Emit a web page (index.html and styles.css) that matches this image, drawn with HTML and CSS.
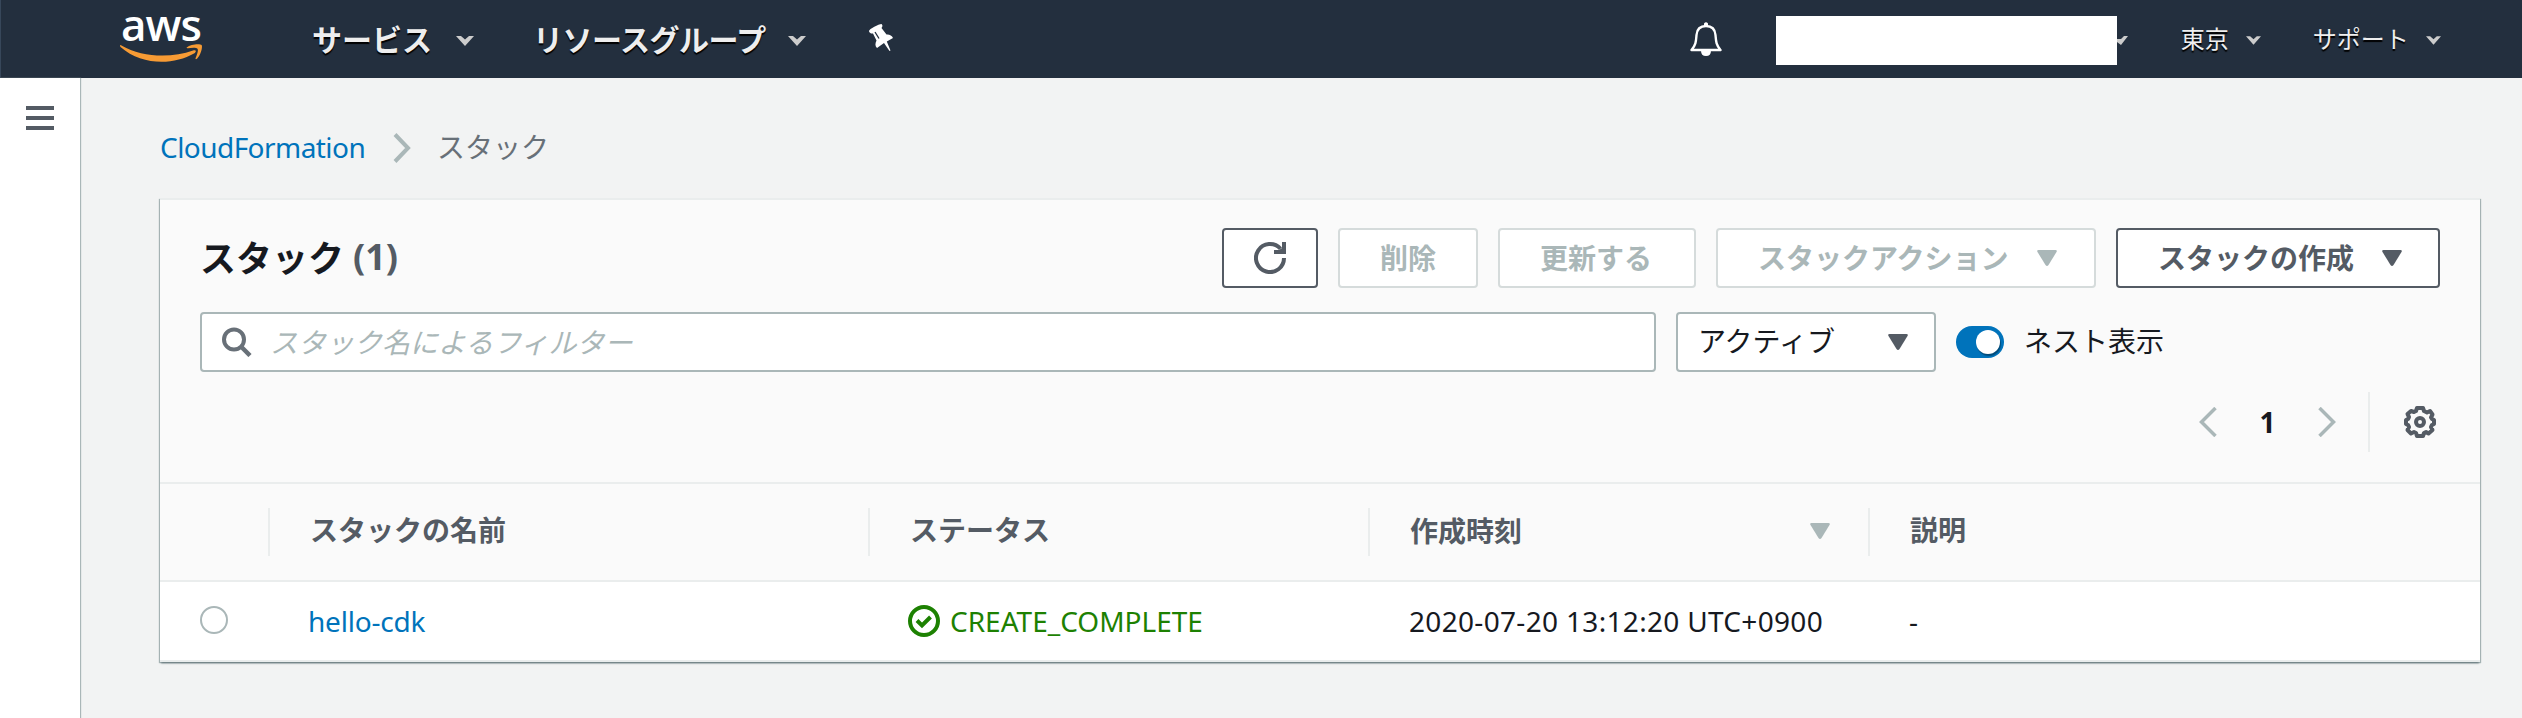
FILE: index.html
```html
<!DOCTYPE html>
<html lang="ja">
<head>
<meta charset="utf-8">
<title>CloudFormation - スタック</title>
<link rel="stylesheet" href="styles.css">
</head>
<body>
<header class="nav">
  <div class="logo">
    <span class="logo-text">aws</span>
    <svg class="smile" viewBox="0 0 82 19" width="82" height="19"><path fill="#f79b34" d="M1 1.2C23 14 52 14 73 6.500C76 5.500 77 7.500 74 9.500C54 21 22 22 .5 3C-.3 2 0 .7 1 1.200ZM67 3.200C70 .3 80 -.8 81.600 1C83 3 80.500 11.500 77 14.800C75.800 15.800 75.200 15 75.600 14C77.500 9.500 78.500 6 77.500 4.700C76.300 3.300 71.500 3.800 68 4.200C66.500 4.300 66.200 3.900 67 3.200Z"/></svg>
  </div>
  <a class="menu services">サービス<svg class="caret" viewBox="0 0 18 10" width="18" height="10"><path fill="#ccc" d="M0 0H5L9 3.500L13 0H18L9 10Z"/></svg></a>
  <a class="menu groups">リソースグループ<svg class="caret" viewBox="0 0 18 10" width="18" height="10"><path fill="#ccc" d="M0 0H5L9 3.500L13 0H18L9 10Z"/></svg></a>
  <svg class="pin" viewBox="0 0 24 27" width="24" height="27"><path fill="#fff" d="M0 7C0 5 10 0 12.500 0C14 1 13.500 3 12.500 4L17.500 10.500C20 10 23 11.500 24 14L17.800 17.500L21.500 26.500L20.500 27L15 19L8 24C6 22 6 19.500 7.500 16.500L4 9.500C2 9.800 0 8.800 0 7Z"/><path d="M6 8L10 14.500" stroke="#232f3e" stroke-width="1.300"/></svg>
  <svg class="bell" viewBox="0 0 32 34" width="32" height="34"><path fill="none" stroke="#fff" stroke-width="2.400" stroke-linejoin="round" d="M1.500 28C6 23 6 19 6.500 13C7 7 10 4 16 4C22 4 25 7 25.500 13C26 19 26 23 30.500 28Z"/><path fill="#fff" d="M14 3.500V1.500Q16-1 18 1.500V3.500ZM11 28.500H21Q21 34 16 34Q11 34 11 28.500Z"/></svg>
  <div class="account"></div>
  <svg class="account-caret" viewBox="0 0 11 9" width="11" height="9"><path fill="#ccc" d="M0 3L4 3L7 0H11L4 9L0 6Z"/></svg>
  <a class="menu small region">東京<svg class="caret" viewBox="0 0 18 10" width="15" height="9"><path fill="#ccc" d="M0 0H5L9 3.500L13 0H18L9 10Z"/></svg></a>
  <a class="menu small support">サポート<svg class="caret" viewBox="0 0 18 10" width="15" height="9"><path fill="#ccc" d="M0 0H5L9 3.500L13 0H18L9 10Z"/></svg></a>
</header>
<div class="body">
  <aside class="side"><i></i><i></i><i></i></aside>
  <main class="main">
    <nav class="crumbs">
      <a class="link crumb-link">CloudFormation</a>
      <svg class="crumb-sep" viewBox="0 0 18 30" width="18" height="30"><path fill="none" stroke="#aab7b8" stroke-width="4" d="M2 1.500L15 15L2 28.500"/></svg>
      <span class="crumb">スタック</span>
    </nav>
    <section class="card">
      <div class="card-head">
        <div class="row title-row">
          <h1>スタック</h1><span class="count">(1)</span>
          <div class="buttons">
            <button class="btn refresh"><svg viewBox="0 0 32 32" width="32" height="32"><path fill="none" stroke="#545b64" stroke-width="4" d="M30 16A14 14 0 1 1 26.500 6.800"/><path fill="#545b64" d="M28 0H32V12H20V8H25L28 6Z"/></svg></button>
            <button class="btn off delete">削除</button>
            <button class="btn off update">更新する</button>
            <button class="btn off wide-action">スタックアクション<svg class="tri" viewBox="0 0 20 16" width="20" height="16"><path d="M1.500 0H18.500Q20.500 0 19.500 2L11.500 15Q10 17 8.500 15L.5 2Q-.5 0 1.500 0Z"/></svg></button>
            <button class="btn create">スタックの作成<svg class="tri" viewBox="0 0 20 16" width="20" height="16"><path d="M1.500 0H18.500Q20.500 0 19.500 2L11.500 15Q10 17 8.500 15L.5 2Q-.5 0 1.500 0Z"/></svg></button>
          </div>
        </div>
        <div class="row filter-row">
          <div class="search"><svg viewBox="0 0 30 30" width="30" height="30"><circle cx="12" cy="12.500" r="10" fill="none" stroke="#687078" stroke-width="4"/><path stroke="#687078" stroke-width="4.500" d="M19 19.500L28 28.500"/></svg><span class="placeholder">スタック名によるフィルター</span></div>
          <div class="select"><span class="select-text">アクティブ</span><svg class="tri" viewBox="0 0 20 16" width="20" height="16"><path d="M1.500 0H18.500Q20.500 0 19.500 2L11.500 15Q10 17 8.500 15L.5 2Q-.5 0 1.500 0Z"/></svg></div>
          <span class="toggle"><i></i></span>
          <span class="toggle-label">ネスト表示</span>
        </div>
        <div class="row pager">
          <svg viewBox="0 0 18 30" width="18" height="30"><path fill="none" stroke="#aab7b8" stroke-width="3.500" d="M16.500 1L2.500 15L16.500 29"/></svg>
          <b class="page">1</b>
          <svg viewBox="0 0 18 30" width="18" height="30"><path fill="none" stroke="#aab7b8" stroke-width="3.500" d="M1.500 1L15.500 15L1.500 29"/></svg>
          <span class="divider"></span>
          <svg class="gear" viewBox="0 0 32 32" width="32" height="32"><path fill="none" stroke="#545b64" stroke-width="4" stroke-linejoin="round" d="M13 2H19L20 5L23 6.500L26 5L28.500 8.500L27 11.500L28 13L30 14V18L28 19L27 21L28.500 24L24.500 27.500L22 26L20 27L19 30H13L12 27L10 26L7 27.500L3.500 24L5 21L4 19L2 18V14L4 13L5 11L3.500 8L7 5L10 6L12 5Z"/><circle cx="16" cy="16" r="4" fill="none" stroke="#545b64" stroke-width="4"/></svg>
        </div>
      </div>
      <div class="grid thead">
        <div class="cell"></div>
        <div class="cell">スタックの名前</div>
        <div class="cell">ステータス</div>
        <div class="cell sort">作成時刻<svg class="tri" viewBox="0 0 20 16" width="20" height="16"><path d="M1.500 0H18.500Q20.500 0 19.500 2L11.500 15Q10 17 8.500 15L.5 2Q-.5 0 1.500 0Z"/></svg></div>
        <div class="cell">説明</div>
      </div>
      <div class="grid trow">
        <div class="cell"><span class="radio"></span></div>
        <div class="cell link name">hello-cdk</div>
        <div class="cell status"><svg viewBox="0 0 32 32" width="32" height="32"><circle cx="16" cy="16" r="14" fill="none" stroke="#1d8102" stroke-width="4"/><path fill="none" stroke="#1d8102" stroke-width="4" d="M9 15.500L14 20.500L22.500 12"/></svg><span class="status-text">CREATE_COMPLETE</span></div>
        <div class="cell date">2020-07-20 13:12:20 UTC+0900</div>
        <div class="cell">-</div>
      </div>
    </section>
  </main>
</div>
</body>
</html>
```
FILE: styles.css
```css
* { box-sizing: border-box; }
body { margin: 0; height: 718px; background: #f2f3f3; color: #16191f; font: 28px/40px "Noto Sans", "Noto Sans CJK JP", sans-serif; display: flex; flex-direction: column; }
svg { display: block; flex: none; }
.nav { height: 78px; flex: none; background: #232f3e; border-left: 1px solid #37475a; display: flex; align-items: flex-start; }
.logo { width: 82px; margin-left: 119px; padding-top: 4px; display: flex; flex-direction: column; align-items: center; }
.logo-text { color: #fff; font: 600 44px/40px "Open Sans", sans-serif; letter-spacing: -1px; height: 40px; }
.menu { display: flex; align-items: center; height: 78px; padding-bottom: 3px; color: #eee; font: bold 30px/40px "Noto Sans CJK JP", sans-serif; text-shadow: 0 2px 1px #000; white-space: nowrap; }
.caret { margin: 7px 0 0 24px; }
.services { margin-left: 110px; }
.groups { margin-left: 59px; letter-spacing: -0.500px; }
.groups .caret { margin-left: 22px; }
.pin { margin: 24px 0 0 63px; }
.bell { margin: 22px 0 0 797px; }
.account { width: 341px; height: 49px; margin: 16px 0 0 54px; background: #fff; }
.account-caret { margin-top: 36px; }
.small { font-size: 24px; font-weight: 400; padding-bottom: 2px; }
.small .caret { margin: 5px 0 0 17px; }
.region { margin-left: 53px; }
.support { margin-left: 52px; }
.body { flex: 1; display: flex; }
.side { width: 80px; background: #fff; padding: 28px 26px; box-shadow: 1px 0 1px #aab7b8; display: flex; flex-direction: column; gap: 6px; }
.side i { height: 4px; background: #545b64; }
.main { flex: 1; padding: 50px 42px 0 79px; }
.crumbs { display: flex; height: 40px; align-items: center; margin-bottom: 30px; padding-left: 1px; }
.link { color: #0073bb; }
.crumb-link { width: 233px; letter-spacing: -0.550px; margin-top: -2px; }
.crumb { color: #687078; margin: -2px 0 0 26px; }
.card { background: #fff; border-top: 2px solid #eaeded; height: 464px; margin-left: 1px; box-shadow: 0 2px 2px -1px #5f7276, 1px 1px 1px #aab7b8, -1px 1px 1px #aab7b8; }
.card-head { height: 284px; background: #fafafa; border-bottom: 2px solid #eaeded; padding: 28px 40px 0; }
.row { display: flex; align-items: center; height: 60px; }
h1 { margin: 0; font: bold 36px/44px "Noto Sans CJK JP", sans-serif; padding-bottom: 4px; }
.count { font-size: 36px; font-weight: bold; color: #545b64; margin-left: 9px; padding-bottom: 2px; }
.buttons { margin-left: auto; display: flex; gap: 20px; }
.btn { height: 60px; padding: 0 40px 3px; background: #fff; border: 2px solid #545b64; border-radius: 4px; color: #545b64; font: bold 28px/40px "Noto Sans CJK JP", sans-serif; display: flex; align-items: center; white-space: nowrap; }
.off { border-color: #d5dbdb; color: #aab7b8; }
.refresh { width: 96px; padding: 0 30px; }
.delete { width: 140px; }
.update { width: 198px; }
.btn .tri { margin: 2px 0 0 28px; }
.wide-action { width: 380px; }
.create { width: 324px; }
.tri { fill: currentColor; }
.filter-row { margin-top: 24px; }
.search { width: 1456px; height: 60px; background: #fff; border: 2px solid #aab7b8; border-radius: 4px; display: flex; align-items: center; padding-left: 20px; }
.placeholder { color: #aab7b8; font-style: italic; margin-left: 18px; }
.select { width: 260px; height: 60px; margin-left: 20px; padding: 0 26px 0 20px; background: #fff; border: 2px solid #aab7b8; border-radius: 4px; display: flex; align-items: center; justify-content: space-between; }
.select-text { padding-bottom: 2px; }
.select .tri { color: #545b64; }
.toggle { width: 48px; height: 32px; margin-left: 20px; border-radius: 16px; background: #0073bb; display: flex; align-items: center; justify-content: flex-end; padding-right: 4px; }
.toggle i { width: 24px; height: 24px; border-radius: 50%; background: #fff; box-shadow: 1px 2px 1px rgba(0, 0, 0, .35); }
.toggle-label { margin-left: 20px; padding-bottom: 2px; }
.pager { margin-top: 20px; justify-content: flex-end; padding-right: 4px; }
.page { width: 101px; text-align: center; padding-bottom: 1px; }
.divider { width: 2px; height: 60px; background: #eaeded; margin: 0 34px 0 32px; }
.grid { display: grid; grid-template-columns: 110px 600px 500px 500px 1fr; align-items: center; }
.thead { height: 98px; background: #fafafa; border-bottom: 2px solid #eaeded; color: #545b64; font-weight: bold; }
.thead .cell { height: 48px; line-height: 44px; padding-left: 40px; border-right: 2px solid #eaeded; }
.thead .cell:last-child { border: 0; }
.thead .sort { display: flex; align-items: center; justify-content: space-between; padding: 0 38px 2px 40px; }
.sort .tri { color: #aab7b8; }
.trow { height: 80px; border-bottom: 2px solid #eaeded; }
.trow .cell { padding-left: 39px; white-space: nowrap; }
.trow .name { padding-left: 38px; letter-spacing: -0.200px; }
.radio { display: block; width: 28px; height: 28px; margin: -2px 0 0 1px; border: 2px solid #aab7b8; border-radius: 50%; }
.trow .status { display: flex; align-items: center; color: #1d8102; padding-left: 38px; }
.status-text { margin-left: 10px; }
.date { letter-spacing: 0.320px; }
```
